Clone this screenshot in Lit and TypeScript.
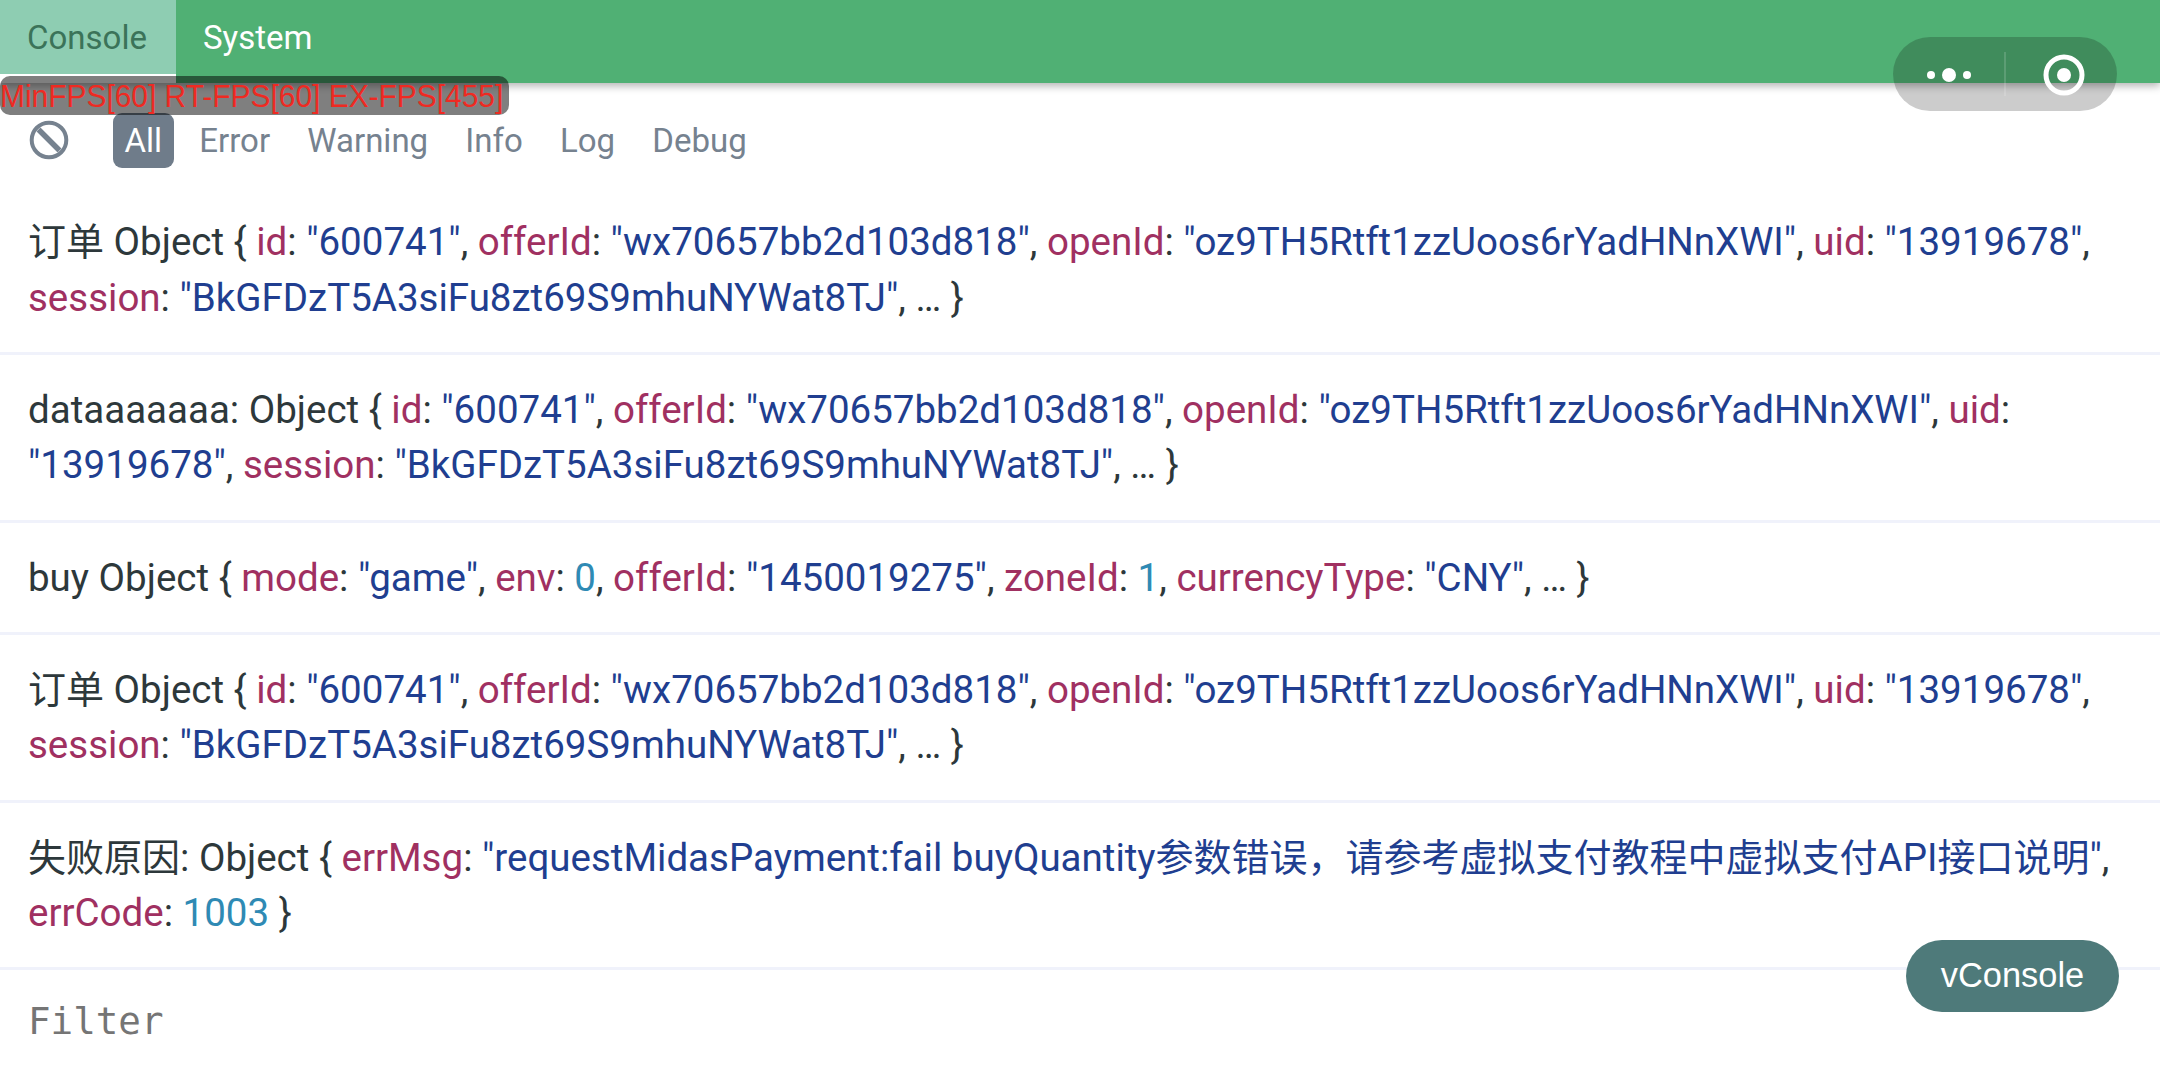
import { LitElement, html, css } from "lit";
import { customElement } from "lit/decorators.js";

type Tok = [string, string];
const ORDER: Tok[] = [
  ["d", "订单 Object { "], ["k", "id"], ["d", ": "], ["s", '"600741"'], ["d", ", "],
  ["k", "offerId"], ["d", ": "], ["s", '"wx70657bb2d103d818"'], ["d", ", "],
  ["k", "openId"], ["d", ": "], ["s", '"oz9TH5Rtft1zzUoos6rYadHNnXWI"'], ["d", ", "],
  ["k", "uid"], ["d", ": "], ["s", '"13919678"'], ["d", ", "],
  ["k", "session"], ["d", ": "], ["s", '"BkGFDzT5A3siFu8zt69S9mhuNYWat8TJ"'], ["d", ", … }"],
];
const ROWS: Tok[][] = [
  ORDER,
  [["d", "dataaaaaaa: Object { "], ...ORDER.slice(1)],
  [
    ["d", "buy Object { "], ["k", "mode"], ["d", ": "], ["s", '"game"'], ["d", ", "],
    ["k", "env"], ["d", ": "], ["n", "0"], ["d", ", "],
    ["k", "offerId"], ["d", ": "], ["s", '"1450019275"'], ["d", ", "],
    ["k", "zoneId"], ["d", ": "], ["n", "1"], ["d", ", "],
    ["k", "currencyType"], ["d", ": "], ["s", '"CNY"'], ["d", ", … }"],
  ],
  ORDER,
  [
    ["d", "失败原因: Object { "], ["k", "errMsg"], ["d", ": "],
    ["s", '"requestMidasPayment:fail buyQuantity参数错误，请参考虚拟支付教程中虚拟支付API接口说明"'], ["d", ", "],
    ["k", "errCode"], ["d", ": "], ["n", "1003"], ["d", " }"],
  ],
];
const FILTERS = ["All", "Error", "Warning", "Info", "Log", "Debug"];

const withCjk = (t: string) =>
  t.split(/([\u3000-\u303f\u4e00-\u9fff\uff00-\uffef]+)/).map((part, i) =>
    i % 2 ? html`<span class="cjk">${part}</span>` : part
  );

@customElement("app-root")
export class AppRoot extends LitElement {
  static styles = css`
    :host {
      display: block;
      position: relative;
      width: 2160px;
      height: 1080px;
      overflow: hidden;
      background: #fff;
      font-family: Roboto, "Noto Sans CJK SC", sans-serif;
      color: #2d383b;
    }
    .page { display: flex; flex-direction: column; height: 100%; }
    .header {
      display: flex;
      height: 83px;
      flex: none;
      background: #50b074;
      box-shadow: 0 3px 8px rgba(0, 0, 0, 0.3);
      position: relative;
      font-size: 33px;
    }
    .tab { display: flex; align-items: center; padding: 0 27px; height: 74px; color: #fff; }
    .tab.active { background: #8ecdb2; color: #3b7359; width: 176px; box-sizing: border-box; box-shadow: 0 9px 0 #fff; }
    .levels { display: flex; align-items: center; height: 104px; box-sizing: border-box; padding: 10px 0 0 28px; flex: none; font-size: 33px; color: #76828f; }
    .clear { width: 42px; height: 42px; margin-right: 43px; flex: none; }
    .level { height: 55px; line-height: 55px; padding: 0 11.5px; margin-left: 14.2px; border-radius: 9px; }
    .level.on { background: #6f7c8a; color: #fff; margin-left: 0; }
    .row {
      flex: none;
      padding: 27px 28px 26.8px;
      border-bottom: 3px solid #f0f2fb;
      font-size: 38.5px;
      line-height: 55.5px;
    }
    .cjk { font-size: 38px; line-height: 1; }
    .k { color: #a03061; }
    .s { color: #203e90; }
    .n { color: #2f8ab4; }
    .filter { flex: 1; display: flex; align-items: center; padding: 0 28px 8px; font: 37.5px "DejaVu Sans Mono", monospace; color: #757575; }
    .fps {
      position: absolute;
      left: 0;
      top: 76px;
      width: 509px;
      height: 38.5px;
      border-radius: 10px;
      background: rgba(0, 0, 0, 0.5);
      color: #ee2a22;
      white-space: nowrap;
    }
    .fps span {
      display: inline-block;
      font: 32px/40px "Liberation Sans", sans-serif;
      transform: scaleX(0.935);
      transform-origin: 0 0;
    }
    .capsule {
      position: absolute;
      left: 1893px;
      top: 37px;
      width: 224px;
      height: 74px;
      border-radius: 37px;
      background: rgba(0, 0, 0, 0.2);
    }
    .capsule svg { display: block; }
    .vbtn {
      position: absolute;
      left: 1906px;
      top: 940px;
      width: 213px;
      height: 72px;
      border-radius: 36px;
      background: #4e7a7a;
      color: #fff;
      font: 34.4px/70px "Liberation Sans", sans-serif;
      text-align: center;
    }
  `;

  render() {
    return html`
      <div class="page">
        <div class="header">
          <div class="tab active">Console</div>
          <div class="tab">System</div>
        </div>
        <div class="levels">
          <svg class="clear" viewBox="0 0 42 42">
            <circle cx="21" cy="21" r="17.3" fill="none" stroke="#76828f" stroke-width="4" />
            <path d="M10.5 10.5 L31.5 31.5" stroke="#76828f" stroke-width="5.5" />
          </svg>
          ${FILTERS.map((f, i) => html`<div class="level ${i === 0 ? "on" : ""}">${f}</div>`)}
        </div>
        ${ROWS.map(
          (r) => html`<div class="row">${r.map(([c, t]) => (c === "d" ? withCjk(t) : html`<span class=${c}>${withCjk(t)}</span>`))}</div>`
        )}
        <div class="filter">Filter</div>
      </div>
      <div class="fps"><span>MinFPS[60] RT-FPS[60] EX-FPS[455]</span></div>
      <div class="capsule">
        <svg width="224" height="74" viewBox="0 0 224 74">
          <circle cx="38" cy="38" r="4" fill="#fff" />
          <circle cx="56" cy="38" r="7" fill="#fff" />
          <circle cx="74" cy="38" r="4" fill="#fff" />
          <path d="M112 15 V59" stroke="rgba(255,255,255,.3)" stroke-width="1" />
          <circle cx="171" cy="38" r="18" fill="none" stroke="#fff" stroke-width="5" />
          <circle cx="171" cy="38" r="7" fill="#fff" />
        </svg>
      </div>
      <div class="vbtn">vConsole</div>
    `;
  }
}
